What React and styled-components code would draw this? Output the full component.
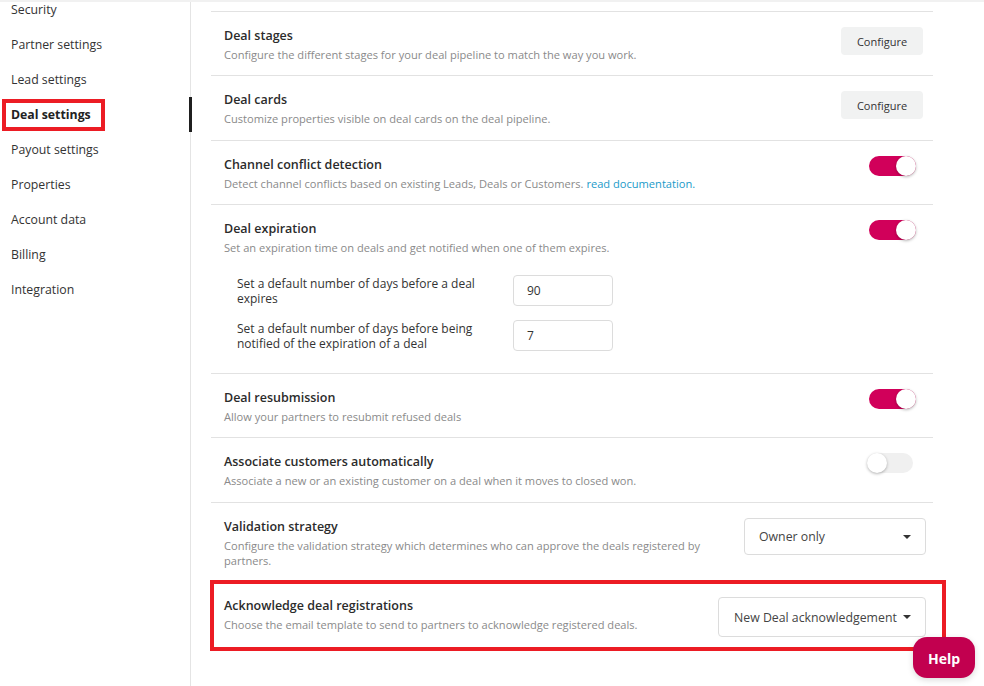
import React from "react";
import styled, { createGlobalStyle } from "styled-components";

const GlobalStyle = createGlobalStyle`
  html, body { margin: 0; padding: 0; background: #fff; overflow: hidden; }
  body { font-family: "Open Sans", "Noto Sans", Arial, sans-serif; color: #333; }
  * { box-sizing: border-box; }
`;

const Page = styled.div`
  display: grid;
  grid-template-columns: 191px 1fr;
  height: 686px;
  width: 984px;
  border-top: 2px solid #f1f1f1;
  overflow: hidden;
  position: relative;
`;

const Sidebar = styled.nav`
  border-right: 1px solid #e4e4e4;
  height: 100%;
`;

const NavList = styled.ul`
  list-style: none;
  margin: -10px 0 0 0;
  padding: 0;
`;

const NavItem = styled.li`
  position: relative;
  height: 35px;
  display: flex;
  align-items: center;
  padding-left: 11px;
  font-size: 12.3px;
  font-weight: ${(p) => (p.$active ? 700 : 400)};
  color: ${(p) => (p.$active ? "#222" : "#333")};
  ${(p) =>
    p.$active &&
    `
    &::after {
      content: "";
      position: absolute;
      right: -2px;
      top: 0;
      bottom: 0;
      width: 3px;
      background: #1f1f1f;
    }
  `}
`;

const Highlight = styled.span`
  position: absolute;
  border: 4px solid #ec1c24;
  pointer-events: none;
  left: ${(p) => p.$l}px;
  right: ${(p) => p.$r}px;
  top: ${(p) => p.$t}px;
  bottom: ${(p) => p.$b}px;
`;

const Main = styled.main`
  padding: 9px 51px 0 20px;
`;

const RowList = styled.div`
  border-top: 1px solid #e2e2e2;
`;

const Row = styled.section`
  position: relative;
  display: flex;
  align-items: flex-start;
  justify-content: space-between;
  gap: 24px;
  padding: 14px 7px ${(p) => p.$pb || 13}px 13px;
  border-bottom: ${(p) => (p.$last ? "none" : "1px solid #e2e2e2")};
`;

const RowText = styled.div`
  flex: 1;
  min-width: 0;
`;

const Title = styled.h3`
  margin: 0;
  font-size: 12.5px;
  line-height: 20px;
  font-weight: 600;
  color: #2b2b2b;
`;

const Desc = styled.p`
  margin: 1px 0 0;
  font-size: 11.1px;
  line-height: 15px;
  color: #8a8a8a;
  max-width: ${(p) => p.$max || "none"};
`;

const Link = styled.a`
  color: #1a9ac9;
  text-decoration: none;
`;

const ConfigButton = styled.button`
  margin: 1px 3px 0 0;
  width: 82px;
  height: 28px;
  border: none;
  border-radius: 4px;
  background: #f1f2f2;
  color: #333;
  font-family: inherit;
  font-size: 11px;
  cursor: pointer;
`;

const Toggle = styled.span`
  position: relative;
  display: block;
  flex: none;
  margin: 1px ${(p) => (p.$on ? 10 : 13)}px 0 0;
  width: ${(p) => (p.$on ? 47 : 46)}px;
  height: 20px;
  border-radius: 10px;
  background: ${(p) => (p.$on ? "#d1005a" : "#f0f0f0")};
  &::after {
    content: "";
    position: absolute;
    top: 0;
    ${(p) => (p.$on ? "right: 0;" : "left: 0;")}
    width: 20px;
    height: 20px;
    border-radius: 50%;
    background: #fff;
    box-shadow: 0 1px 3px rgba(0, 0, 0, 0.3);
  }
`;

const SubGrid = styled.div`
  display: grid;
  grid-template-columns: 262px 100px;
  column-gap: 14px;
  row-gap: 14px;
  align-items: center;
  margin: 20px 0 9px 13px;
`;

const SubLabel = styled.label`
  font-size: 12px;
  line-height: 14.5px;
  color: #333;
  padding-top: 2px;
`;

const NumberInput = styled.div`
  height: 31px;
  border: 1px solid #dcdcdc;
  border-radius: 4px;
  padding: 0 13px;
  display: flex;
  align-items: center;
  font-size: 12px;
  color: #333;
`;

const Select = styled.div`
  flex: none;
  margin-top: ${(p) => p.$mt || 1}px;
  width: ${(p) => p.$w}px;
  height: ${(p) => p.$h || 37}px;
  border: 1px solid #dcdcdc;
  border-radius: 4px;
  padding: 0 14px 0 ${(p) => p.$pl || 14}px;
  display: flex;
  align-items: center;
  justify-content: space-between;
  font-size: 12.3px;
  color: #444;
`;

const Caret = styled.span`
  width: 0;
  height: 0;
  border-left: 4px solid transparent;
  border-right: 4px solid transparent;
  border-top: 4px solid #333;
`;

const HelpButton = styled.button`
  position: absolute;
  right: 9px;
  bottom: 8px;
  width: 62px;
  height: 41px;
  border: none;
  border-radius: 14px;
  background: #c2004f;
  color: #fff;
  font-family: "Open Sans", Arial, sans-serif;
  font-weight: 700;
  font-size: 14px;
  padding-top: 3px;
  box-shadow: 0 2px 6px rgba(0, 0, 0, 0.15);
`;

const navItems = [
  "Security",
  "Partner settings",
  "Lead settings",
  "Deal settings",
  "Payout settings",
  "Properties",
  "Account data",
  "Billing",
  "Integration",
];

export default function App() {
  return (
    <>
      <GlobalStyle />
      <Page>
        <Sidebar>
          <NavList>
            {navItems.map((item) => (
              <NavItem key={item} $active={item === "Deal settings"}>
                {item}
                {item === "Deal settings" && (
                  <Highlight $l={2} $r={85} $t={2} $b={1} />
                )}
              </NavItem>
            ))}
          </NavList>
        </Sidebar>
        <Main>
          <RowList>
            <Row>
              <RowText>
                <Title>Deal stages</Title>
                <Desc>Configure the different stages for your deal pipeline to match the way you work.</Desc>
              </RowText>
              <ConfigButton>Configure</ConfigButton>
            </Row>
            <Row $pb={14}>
              <RowText>
                <Title>Deal cards</Title>
                <Desc>Customize properties visible on deal cards on the deal pipeline.</Desc>
              </RowText>
              <ConfigButton>Configure</ConfigButton>
            </Row>
            <Row>
              <RowText>
                <Title>Channel conflict detection</Title>
                <Desc>
                  Detect channel conflicts based on existing Leads, Deals or Customers.{" "}
                  <Link href="#">read documentation.</Link>
                </Desc>
              </RowText>
              <Toggle $on />
            </Row>
            <Row>
              <RowText>
                <Title>Deal expiration</Title>
                <Desc>Set an expiration time on deals and get notified when one of them expires.</Desc>
                <SubGrid>
                  <SubLabel>Set a default number of days before a deal expires</SubLabel>
                  <NumberInput>90</NumberInput>
                  <SubLabel>Set a default number of days before being notified of the expiration of a deal</SubLabel>
                  <NumberInput>7</NumberInput>
                </SubGrid>
              </RowText>
              <Toggle $on />
            </Row>
            <Row>
              <RowText>
                <Title>Deal resubmission</Title>
                <Desc>Allow your partners to resubmit refused deals</Desc>
              </RowText>
              <Toggle $on />
            </Row>
            <Row $pb={14}>
              <RowText>
                <Title>Associate customers automatically</Title>
                <Desc>Associate a new or an existing customer on a deal when it moves to closed won.</Desc>
              </RowText>
              <Toggle />
            </Row>
            <Row>
              <RowText>
                <Title>Validation strategy</Title>
                <Desc $max="490px">
                  Configure the validation strategy which determines who can approve the deals registered by partners.
                </Desc>
              </RowText>
              <Select $w={182} $h={37}>
                Owner only
                <Caret />
              </Select>
            </Row>
            <Row $last>
              <RowText>
                <Title>Acknowledge deal registrations</Title>
                <Desc>Choose the email template to send to partners to acknowledge registered deals.</Desc>
              </RowText>
              <Select $w={208} $h={40} $pl={15}>
                New Deal acknowledgement
                <Caret />
              </Select>
              <Highlight $l={-1} $r={-13} $t={-2} $b={-1} />
            </Row>
          </RowList>
        </Main>
        <HelpButton>Help</HelpButton>
      </Page>
    </>
  );
}
